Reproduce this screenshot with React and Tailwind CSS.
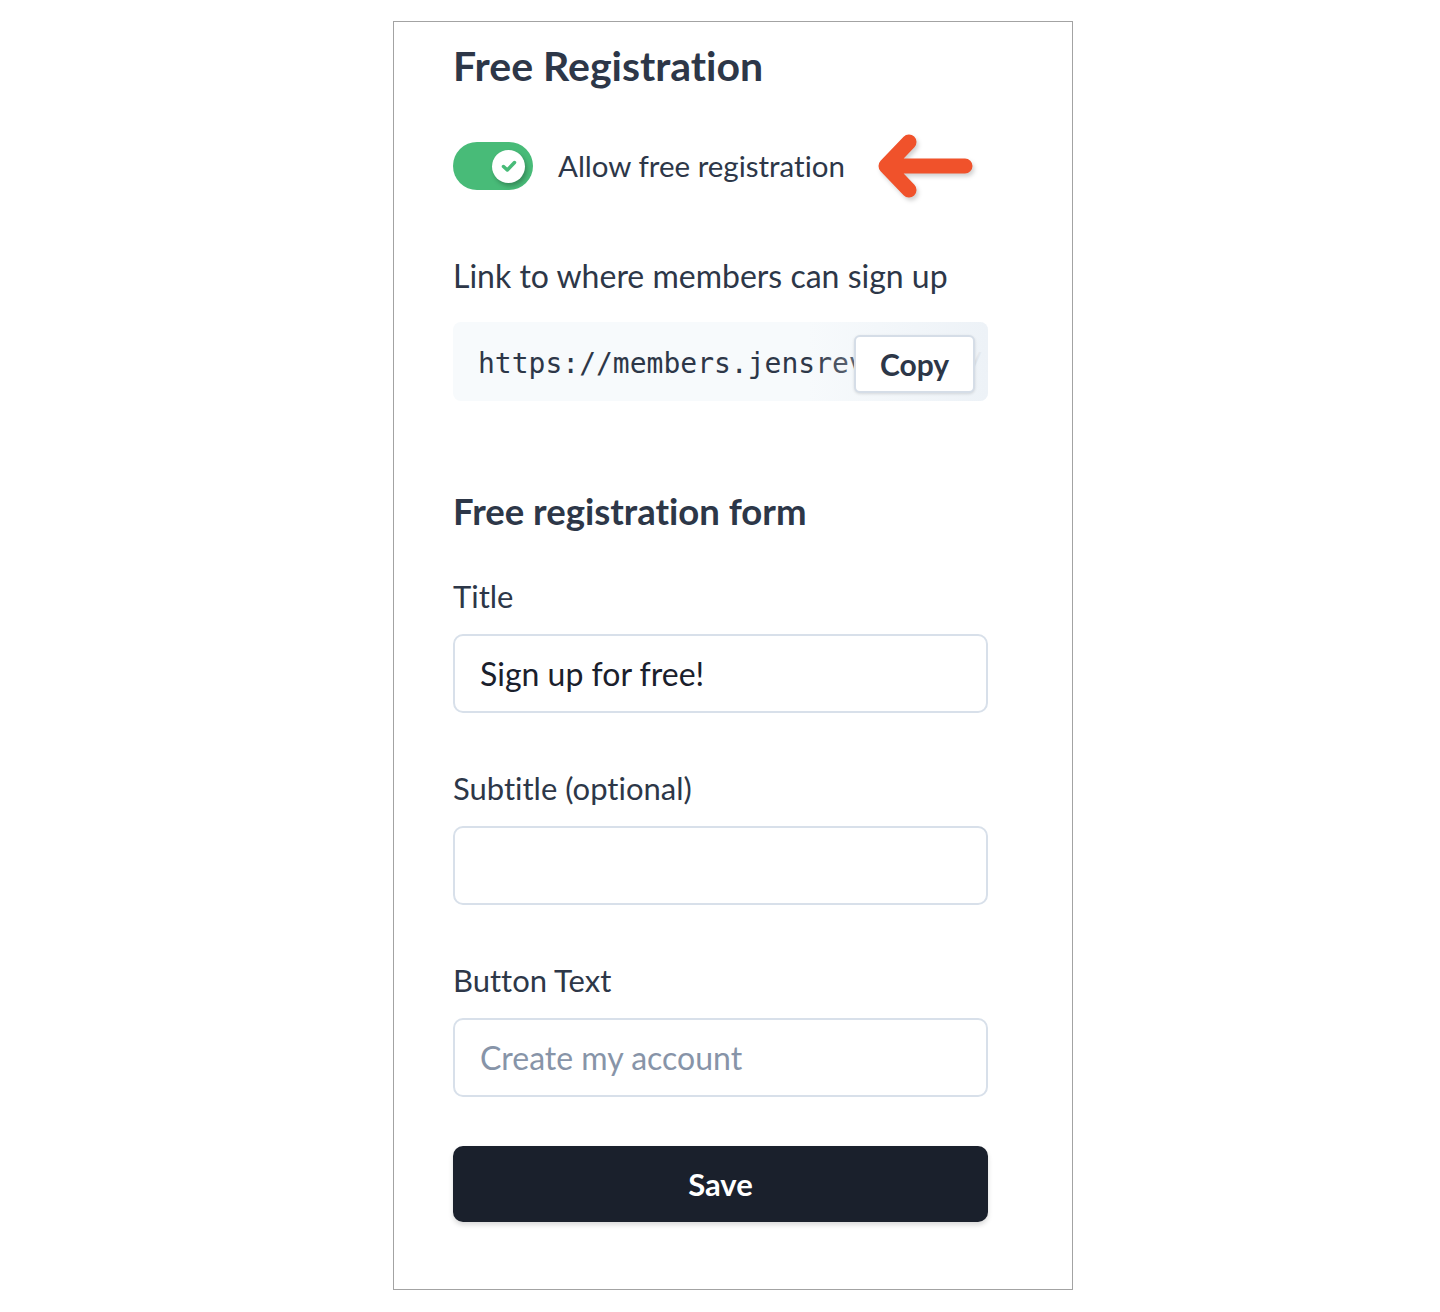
import { useState } from "react";

function Toggle({ on, onChange }) {
  return (
    <button
      onClick={() => onChange(!on)}
      className={`relative w-[80px] h-[48px] rounded-full flex items-center shrink-0 ${
        on ? "bg-[#48bb78] justify-end" : "bg-[#cbd5e0] justify-start"
      } px-[8px]`}
    >
      <span className="w-[33px] h-[33px] rounded-full bg-white shadow-[2px_3px_4px_rgba(0,0,0,0.25)] flex items-center justify-center">
        {on && (
          <svg width="20" height="20" viewBox="0 0 20 20" fill="none">
            <path
              d="M4.5 10.5 L8.3 14 L15.5 6.5"
              stroke="#48bb78"
              strokeWidth="3.5"
              strokeLinecap="round"
              strokeLinejoin="round"
            />
          </svg>
        )}
      </span>
    </button>
  );
}

function Arrow() {
  return (
    <svg
      width="100"
      height="74"
      viewBox="0 0 100 74"
      className="shrink-0 drop-shadow-[2px_3px_2px_rgba(0,0,0,0.18)]"
    >
      <path
        d="M88 37 H10 M32 13 L9 37 L32 61"
        stroke="#f0522b"
        strokeWidth="15"
        strokeLinecap="round"
        strokeLinejoin="round"
        fill="none"
      />
    </svg>
  );
}

function Field({ label, value, placeholder, className = "" }) {
  const [text, setText] = useState(value || "");
  return (
    <div className={className}>
      <label className="block text-[31px] leading-[40px] text-[#2d3748]">
        {label}
      </label>
      <input
        value={text}
        onChange={(e) => setText(e.target.value)}
        placeholder={placeholder}
        className="mt-[18px] w-full h-[79px] border-2 border-[#d8e0ea] rounded-[10px] px-[25px] text-[32px] text-[#1a202c] placeholder:text-[#8794a8] outline-none"
      />
    </div>
  );
}

export default function App() {
  const [allowFree, setAllowFree] = useState(true);
  const signupUrl = "https://members.jensrevue.com/signup";

  return (
    <div
      className="w-full min-h-[1312px] bg-white flex justify-center pt-[21px] [font-variant-ligatures:none]"
      style={{ fontFamily: "Lato, 'Open Sans', sans-serif" }}
    >
      <div className="w-[680px] h-[1269px] border border-[#a3a3a3] pl-[59px] pr-[84px] pt-[22px] ml-[26px]">
        <h1 className="text-[41px] leading-[44px] font-bold text-[#2d3748]">
          Free Registration
        </h1>

        <div className="mt-[54px] flex items-center h-[48px]">
          <Toggle on={allowFree} onChange={setAllowFree} />
          <span className="ml-[25px] text-[29.5px] text-[#2d3748] whitespace-nowrap">
            Allow free registration
          </span>
          <div className="ml-[32px]">
            <Arrow />
          </div>
        </div>

        <p className="mt-[66px] text-[32px] leading-[40px] text-[#2d3748]">
          Link to where members can sign up
        </p>

        <div className="relative mt-[26px] h-[79px] rounded-[8px] bg-[#f7fafc] overflow-hidden flex items-center">
          <span
            className="pl-[25px] pt-[4px] text-[28px] text-[#2d3748] whitespace-nowrap"
            style={{ fontFamily: "'DejaVu Sans Mono', monospace" }}
          >
            {signupUrl}
          </span>
          <div className="absolute right-0 top-0 h-full w-[180px] bg-gradient-to-r from-transparent to-[#edf2f7]" />
          <button className="absolute right-[13px] top-[13px] w-[121px] h-[58px] bg-white border-2 border-[#d5dde7] rounded-[6px] shadow-[0_1px_3px_rgba(0,0,0,0.12)] text-[30px] font-bold text-[#2d3748]">
            Copy
          </button>
        </div>

        <h2 className="mt-[90px] text-[36.5px] leading-[40px] font-bold text-[#2d3748]">
          Free registration form
        </h2>

        <Field className="mt-[45px]" label="Title" value="Sign up for free!" />
        <Field className="mt-[55px]" label="Subtitle (optional)" />
        <Field
          className="mt-[55px]"
          label="Button Text"
          placeholder="Create my account"
        />

        <button className="mt-[49px] w-full h-[76px] rounded-[10px] bg-[#1a202c] text-white text-[31px] font-bold shadow-[0_3px_5px_rgba(0,0,0,0.15)]">
          Save
        </button>
      </div>
    </div>
  );
}
